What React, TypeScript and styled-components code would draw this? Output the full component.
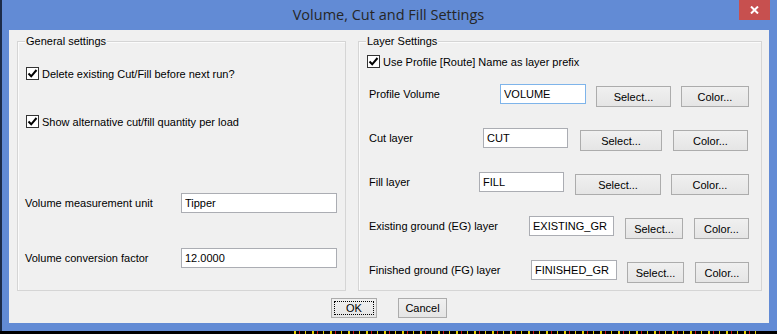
import React from 'react'
import styled, { createGlobalStyle } from 'styled-components'

const GlobalStyle = createGlobalStyle`
    html, body {
        margin: 0;
        padding: 0;
        background: #000;
        width: 777px;
        height: 334px;
        overflow: hidden;
    }
    * {
        box-sizing: border-box;
    }
`

const Window = styled.div`
    width: 777px;
    height: 331px;
    background: #628bd5;
    box-shadow: inset 2px 0 0 #1d2c48;
    display: flex;
    flex-direction: column;
    font-family: "Liberation Sans", Arial, sans-serif;
    font-size: 11px;
    color: #000;
`

const TitleBar = styled.div`
    height: 30px;
    display: grid;
    grid-template-columns: 1fr auto 1fr;
    align-items: center;
`

const Title = styled.div`
    grid-column: 2;
    font-family: "Open Sans", "Noto Sans", sans-serif;
    font-size: 14.5px;
    color: #262626;
    padding-bottom: 1px;
`

const CloseButton = styled.div`
    grid-column: 3;
    justify-self: end;
    align-self: start;
    width: 31px;
    height: 20px;
    margin-right: 7px;
    background: #c7504f;
    display: flex;
    align-items: center;
    justify-content: center;
`

const Client = styled.div`
    margin: 0 8px 0 9px;
    height: 293px;
    background: #f0f0f0;
    display: flex;
    flex-direction: column;
`

const Groups = styled.div`
    display: flex;
    gap: 12px;
    padding: 11px 7px 0 8px;
`

const GroupBox = styled.div<{ $width: number; $padTop: number; $padLeft: number }>`
    position: relative;
    width: ${p => p.$width}px;
    height: 250px;
    border: 1px solid #d5d5d5;
    box-shadow: inset 1px 1px 0 #fbfbfb;
    padding: ${p => p.$padTop}px 0 0 ${p => p.$padLeft}px;
    display: flex;
    flex-direction: column;
`

const Legend = styled.span`
    position: absolute;
    top: -7px;
    left: 7px;
    padding: 0 1px;
    line-height: 13px;
    background: #f0f0f0;
`

const CheckRow = styled.label<{ $top?: number; $indent?: number }>`
    display: flex;
    align-items: center;
    gap: 3px;
    height: 13px;
    margin-top: ${p => p.$top || 0}px;
    margin-left: ${p => p.$indent || 0}px;
    white-space: nowrap;
`

const Box = styled.span`
    width: 13px;
    height: 13px;
    border: 1px solid #333;
    background: #fff;
    display: flex;
    align-items: center;
    justify-content: center;
`

const FieldRow = styled.div<{ $top?: number; $indent?: number }>`
    display: flex;
    align-items: flex-start;
    height: 22px;
    margin-top: ${p => p.$top || 0}px;
    padding-left: ${p => p.$indent || 0}px;
`

const FieldLabel = styled.span<{ $width: number }>`
    width: ${p => p.$width}px;
    line-height: 20px;
    white-space: nowrap;
`

const TextBox = styled.input<{ $width: number; $focused?: boolean }>`
    width: ${p => p.$width}px;
    height: 20px;
    border: 1px solid ${p => (p.$focused ? '#7eb4ea' : '#abadb3')};
    background: #fff;
    padding: 0 3px;
    font-family: "Liberation Sans", Arial, sans-serif;
    font-size: 11px;
    color: #000;
    outline: none;
`

const Button = styled.button<{ $width: number; $gap?: number; $focus?: boolean }>`
    width: ${p => p.$width}px;
    height: 21px;
    margin-left: ${p => p.$gap || 0}px;
    margin-top: 2px;
    border: 1px solid #acacac;
    background: linear-gradient(#f0f0f0, #e5e5e5);
    font-family: "Liberation Sans", Arial, sans-serif;
    font-size: 11px;
    color: #000;
    padding: 0;
    ${p => p.$focus && 'outline: 1px dotted #000; outline-offset: -4px;'}
`

const Footer = styled.div`
    display: flex;
    justify-content: center;
    gap: 21px;
    margin-top: 7px;

    & > button {
        margin-top: 0;
        height: 20px;
    }
`

const Strip = styled.div`
    height: 3px;
    margin-left: 288px;
    width: 474px;
    background: repeating-linear-gradient(90deg, transparent 0 6px, #e2d000 6px 8px, transparent 8px 11px, #d01010 11px 12px, transparent 12px 17px, #e2d000 17px 18px);
`

const Check = () => (
    <Box>
        <svg width="11" height="11" viewBox="0 0 11 11">
            <path d="M1.5 5.5 L4.2 8.3 L9.5 2" fill="none" stroke="#000" strokeWidth="2" />
        </svg>
    </Box>
)

const layerRows = [
    { label: 'Profile Volume', value: 'VOLUME', labelW: 131, inputW: 86, selW: 75, colW: 68, g1: 10, g2: 10, focused: true },
    { label: 'Cut layer', value: 'CUT', labelW: 114, inputW: 85, selW: 82, colW: 75, g1: 12, g2: 11 },
    { label: 'Fill layer', value: 'FILL', labelW: 110, inputW: 85, selW: 86, colW: 78, g1: 11, g2: 10 },
    { label: 'Existing ground (EG) layer', value: 'EXISTING_GR', labelW: 160, inputW: 85, selW: 58, colW: 55, g1: 11, g2: 11 },
    { label: 'Finished ground (FG) layer', value: 'FINISHED_GR', labelW: 162, inputW: 86, selW: 57, colW: 54, g1: 10, g2: 11 },
]

const App: React.FunctionComponent = () => {
    return (
        <>
            <GlobalStyle />
            <Window>
                <TitleBar>
                    <Title>Volume, Cut and Fill Settings</Title>
                    <CloseButton>
                        <svg width="9" height="8" viewBox="0 0 9 8">
                            <path d="M1 0.5 L8 7.5 M8 0.5 L1 7.5" stroke="#fff" strokeWidth="2" />
                        </svg>
                    </CloseButton>
                </TitleBar>
                <Client>
                    <Groups>
                        <GroupBox $width={329} $padTop={25} $padLeft={7}>
                            <Legend>General settings</Legend>
                            <CheckRow $indent={1}>
                                <Check />
                                Delete existing Cut/Fill before next run?
                            </CheckRow>
                            <CheckRow $top={35} $indent={1}>
                                <Check />
                                Show alternative cut/fill quantity per load
                            </CheckRow>
                            <FieldRow $top={65}>
                                <FieldLabel $width={156}>Volume measurement unit</FieldLabel>
                                <TextBox $width={156} defaultValue="Tipper" />
                            </FieldRow>
                            <FieldRow $top={33}>
                                <FieldLabel $width={156}>Volume conversion factor</FieldLabel>
                                <TextBox $width={156} defaultValue="12.0000" />
                            </FieldRow>
                        </GroupBox>
                        <GroupBox $width={404} $padTop={13} $padLeft={8}>
                            <Legend>Layer Settings</Legend>
                            <CheckRow>
                                <Check />
                                Use Profile [Route] Name as layer prefix
                            </CheckRow>
                            {layerRows.map((r, i) => (
                                <FieldRow key={r.label} $top={i === 0 ? 16 : 22} $indent={2}>
                                    <FieldLabel $width={r.labelW}>{r.label}</FieldLabel>
                                    <TextBox $width={r.inputW} $focused={r.focused} defaultValue={r.value} />
                                    <Button $width={r.selW} $gap={r.g1}>Select...</Button>
                                    <Button $width={r.colW} $gap={r.g2}>Color...</Button>
                                </FieldRow>
                            ))}
                        </GroupBox>
                    </Groups>
                    <Footer>
                        <Button $width={46} $focus>OK</Button>
                        <Button $width={49}>Cancel</Button>
                    </Footer>
                </Client>
            </Window>
            <Strip />
        </>
    )
}

export default App
